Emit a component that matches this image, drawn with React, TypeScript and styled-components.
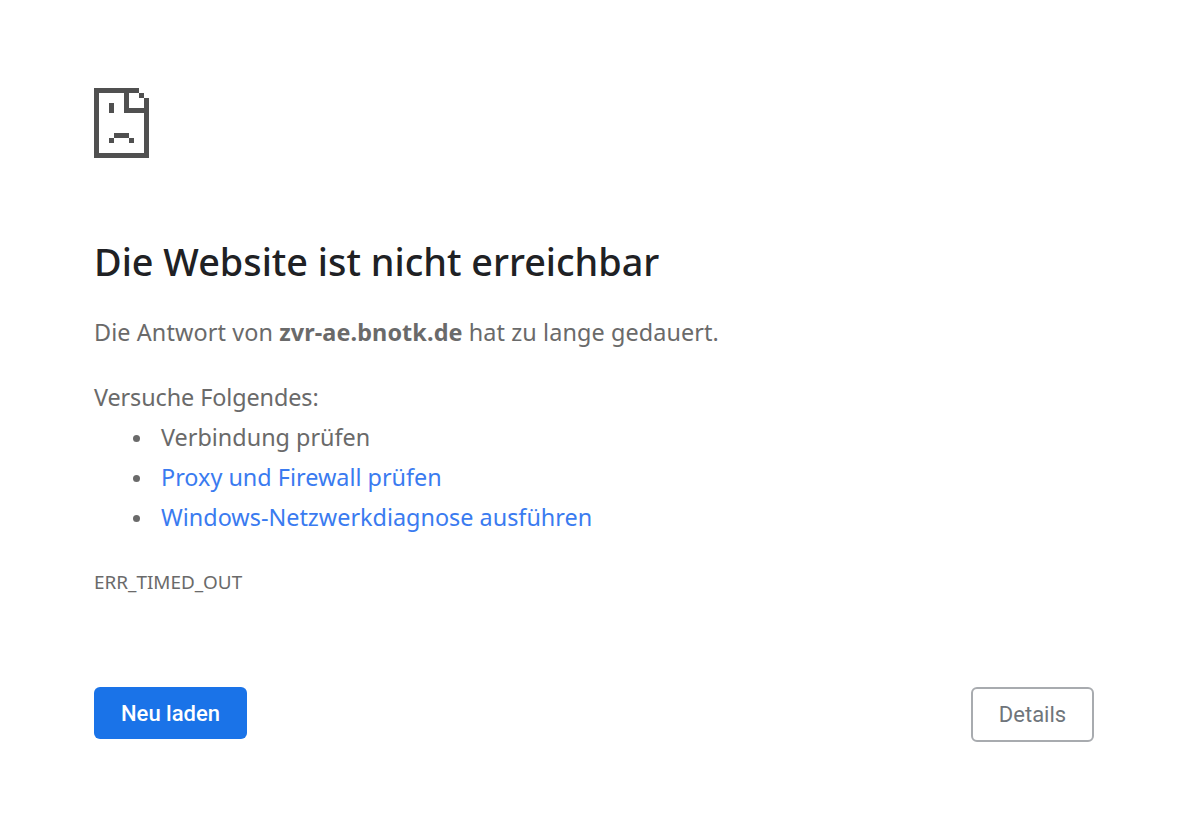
import styled, { createGlobalStyle } from 'styled-components';

const GlobalStyle = createGlobalStyle`
  html, body {
    margin: 0;
    background: #fff;
  }
  body {
    font-family: "Noto Sans", "Open Sans", sans-serif;
    color: #6a6a6a;
  }
`;

const Page = styled.div`
  box-sizing: border-box;
  width: 1178px;
  height: 815px;
  padding: 88px 84px 0 94px;
  overflow: hidden;
`;

const ErrorIcon = styled.svg`
  display: block;
  width: 55px;
  height: 70px;
  fill: #505050;
`;

const Heading = styled.h1`
  margin: 80px 0 0;
  font-size: 37.8px;
  line-height: 48px;
  font-weight: 500;
  color: #202124;
`;

const Summary = styled.p`
  margin: 26px 0 0;
  font-size: 23.4px;
  line-height: 40px;
  letter-spacing: 0.1px;
`;

const Hint = styled(Summary)`
  margin-top: 25px;
  letter-spacing: -0.1px;
`;

const Suggestions = styled.ul`
  margin: 0;
  padding: 0 0 0 67px;
  list-style: none;
`;

const Suggestion = styled.li`
  position: relative;
  font-size: 23.4px;
  line-height: 40px;

  &::before {
    content: '';
    position: absolute;
    left: -28px;
    top: 18px;
    width: 7px;
    height: 7px;
    border-radius: 50%;
    background: #6a6a6a;
  }
`;

const SuggestionLink = styled.a`
  color: #3a7bf0;
  text-decoration: none;
`;

const ErrorCode = styled.div`
  margin-top: 30px;
  font-size: 18.9px;
  line-height: 30px;
`;

const ButtonRow = styled.div`
  display: flex;
  justify-content: space-between;
  align-items: flex-start;
  margin-top: 90px;
`;

const ReloadButton = styled.button`
  box-sizing: border-box;
  width: 153px;
  height: 52px;
  border: 0;
  border-radius: 6px;
  background: #1a73e8;
  color: #fff;
  font-family: Roboto, sans-serif;
  font-size: 22px;
  font-weight: 500;
`;

const DetailsButton = styled.button`
  box-sizing: border-box;
  width: 123px;
  height: 55px;
  border: 2px solid #a8abaf;
  border-radius: 6px;
  background: #fff;
  color: #6f757b;
  font-family: Roboto, sans-serif;
  font-size: 22px;
  font-weight: 400;
`;

const App = () => {
  return (
    <Page>
      <GlobalStyle />
      <ErrorIcon viewBox="0 0 55 70">
        <rect x="0" y="0" width="45" height="5" />
        <rect x="0" y="0" width="5" height="70" />
        <rect x="0" y="65" width="55" height="5" />
        <rect x="50" y="10" width="5" height="60" />
        <rect x="30" y="0" width="5" height="25" />
        <rect x="30" y="20" width="25" height="5" />
        <rect x="45" y="5" width="5" height="5" />
        <rect x="15" y="15" width="5" height="10" />
        <rect x="20" y="45" width="15" height="5" />
        <rect x="15" y="50" width="5" height="5" />
        <rect x="35" y="50" width="5" height="5" />
      </ErrorIcon>
      <Heading>Die Website ist nicht erreichbar</Heading>
      <Summary>
        Die Antwort von <strong>zvr-ae.bnotk.de</strong> hat zu lange gedauert.
      </Summary>
      <Hint>Versuche Folgendes:</Hint>
      <Suggestions>
        <Suggestion>Verbindung prüfen</Suggestion>
        <Suggestion>
          <SuggestionLink href="#">Proxy und Firewall prüfen</SuggestionLink>
        </Suggestion>
        <Suggestion>
          <SuggestionLink href="#">Windows-Netzwerkdiagnose ausführen</SuggestionLink>
        </Suggestion>
      </Suggestions>
      <ErrorCode>ERR_TIMED_OUT</ErrorCode>
      <ButtonRow>
        <ReloadButton>Neu laden</ReloadButton>
        <DetailsButton>Details</DetailsButton>
      </ButtonRow>
    </Page>
  );
};

export default App;
